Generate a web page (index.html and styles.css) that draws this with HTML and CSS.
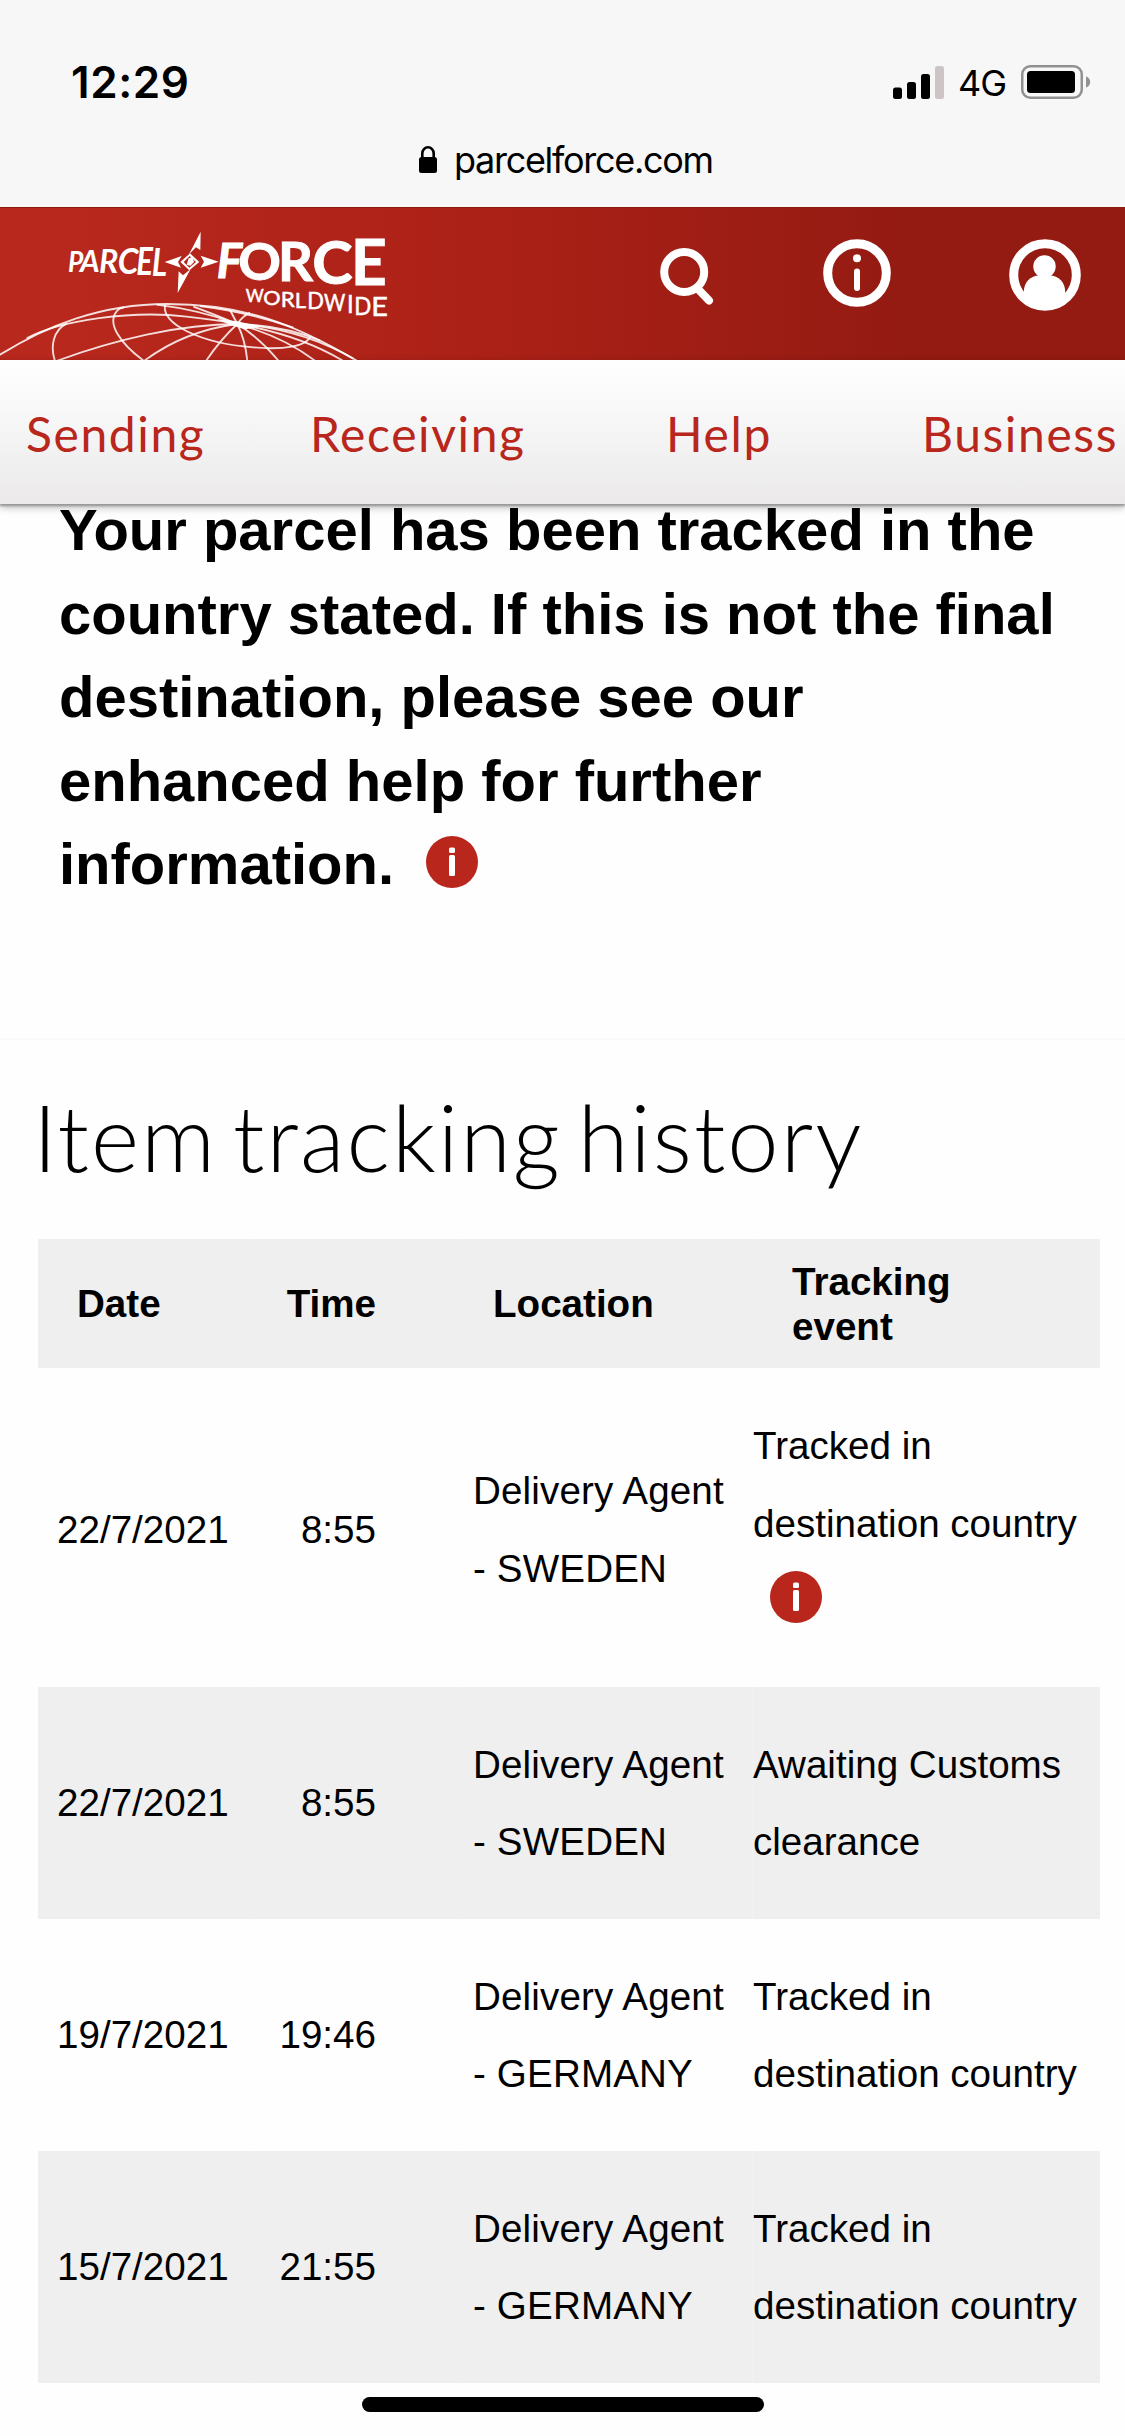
FILE: index.html
```html
<!DOCTYPE html>
<html lang="en">
<head>
<meta charset="utf-8">
<title>Parcelforce Worldwide - Track</title>
<link rel="stylesheet" href="styles.css">
</head>
<body>
<div class="status">
  <div class="status-row">
    <span class="clock">12:29</span>
    <div class="status-icons">
      <svg class="signal" width="52" height="33" viewBox="0 0 52 33">
        <rect x="0" y="21.500" width="9" height="11.500" rx="2.500"/>
        <rect x="14" y="16" width="9" height="17" rx="2.500"/>
        <rect x="28" y="8" width="9" height="25" rx="2.500"/>
        <rect x="42" y="0" width="9" height="33" rx="2.500" fill="#cdc4c5"/>
      </svg>
      <span class="network">4G</span>
      <svg class="battery" width="70" height="34" viewBox="0 0 70 34">
        <rect x="1.250" y="1.250" width="59.500" height="31.500" rx="8" fill="none" stroke="#919191" stroke-width="2.500"/>
        <rect x="6" y="6" width="48" height="22" rx="3.500"/>
        <path d="M65 11.500c2.600.8 4.200 3 4.200 5.500s-1.600 4.700-4.200 5.500z" fill="#919191"/>
      </svg>
    </div>
  </div>
  <div class="address">
    <svg width="18" height="28" viewBox="0 0 18 28">
      <rect x="0" y="11" width="18" height="16" rx="2.500"/>
      <path d="M3.300 12V7.500a5.700 6.200 0 0 1 11.400 0V12" fill="none" stroke="#000" stroke-width="2.600"/>
    </svg>
    <span class="domain">parcelforce.com</span>
  </div>
</div>

<header class="header">
  <svg class="logo" width="420" height="153" viewBox="0 21 1260 459">
    <g fill="none" stroke="#fff" stroke-opacity=".85" stroke-width="5.500">
      <path d="M-5 467C140 378 300 312 500 312C730 312 880 370 1072 483"/>
      <path d="M80 415C180 360 400 330 560 350Q650 360 712 372"/>
      <path d="M170 483C340 420 540 372 712 372"/>
      <path d="M432 483C510 425 610 385 712 372"/>
      <path d="M618 483Q660 420 712 372Q728 348 750 338"/>
      <path d="M742 483Q736 420 712 372L690 330"/>
      <path d="M836 483Q780 415 712 372Q600 330 470 314"/>
      <path d="M946 483Q850 410 712 372Q640 342 580 320"/>
      <path d="M1030 483Q900 405 712 372"/>
      <path d="M1060 476Q900 385 712 372"/>
      <path d="M960 422Q850 376 712 372"/>
      <path d="M880 383Q740 335 600 318"/>
      <path d="M165 483C150 440 160 390 200 371"/>
      <path d="M432 483C360 430 320 370 350 334Q357 324 372 322"/>
      <path d="M496 314C480 370 600 430 760 442C850 450 920 440 932 408"/>
    </g>
    <path fill="#fff" d="M650 357L712 364L785 380L735 388L690 374z"/>
    <g fill="#fff" class="mark">
      <g class="mark-parcel">
        <text x="204" y="215" font-size="88" textLength="46" lengthAdjust="spacingAndGlyphs">P</text>
        <text x="240" y="217" font-size="92" textLength="59" lengthAdjust="spacingAndGlyphs">A</text>
        <text x="297" y="220" font-size="98" textLength="58" lengthAdjust="spacingAndGlyphs">R</text>
        <text x="353" y="223" font-size="106" textLength="62" lengthAdjust="spacingAndGlyphs">C</text>
        <text x="409" y="225" font-size="112" textLength="50" lengthAdjust="spacingAndGlyphs">E</text>
        <text x="455" y="227" font-size="115" textLength="46" lengthAdjust="spacingAndGlyphs">L</text>
      </g>
      <g class="mark-force">
        <text class="slant" x="650" y="235" font-size="141" textLength="76" lengthAdjust="spacingAndGlyphs">F</text>
        <text x="715" y="240" font-size="154" textLength="128" lengthAdjust="spacingAndGlyphs">O</text>
        <text x="834" y="244" font-size="162" textLength="105" lengthAdjust="spacingAndGlyphs">R</text>
        <text x="937" y="252" font-size="180" textLength="121" lengthAdjust="spacingAndGlyphs">C</text>
        <text x="1053" y="255" font-size="190" textLength="107" lengthAdjust="spacingAndGlyphs">E</text>
      </g>
      <g class="mark-world">
        <text x="737" y="305" font-size="53" textLength="54" lengthAdjust="spacingAndGlyphs">W</text>
        <text x="790" y="316" font-size="59" textLength="52" lengthAdjust="spacingAndGlyphs">O</text>
        <text x="842" y="320" font-size="62" textLength="42" lengthAdjust="spacingAndGlyphs">R</text>
        <text x="884" y="325" font-size="66" textLength="34" lengthAdjust="spacingAndGlyphs">L</text>
        <text x="922" y="328" font-size="68" textLength="50" lengthAdjust="spacingAndGlyphs">D</text>
        <text x="972" y="333" font-size="70" textLength="64" lengthAdjust="spacingAndGlyphs">W</text>
        <text x="1041" y="340" font-size="74" textLength="20" lengthAdjust="spacingAndGlyphs">I</text>
        <text x="1063" y="344" font-size="76" textLength="51" lengthAdjust="spacingAndGlyphs">D</text>
        <text x="1114" y="349" font-size="80" textLength="50" lengthAdjust="spacingAndGlyphs">E</text>
      </g>
      <path d="M602 95L601 150L588 142L567 163zM533 279L536 214L549 226L572 207zM494 186L545 168L534 186L543 203zM656 185L602 167L612 185L602 203z"/>
      <path fill-rule="evenodd" d="M570 160L598 186L568 211L541 186zM569 168L551 186L568 203L588 186z"/>
      <path d="M560 194L566 175L577 171L582 186L571 197z"/>
    </g>
  </svg>
  <svg class="icon-search" width="56" height="58" viewBox="0 0 56 58" fill="none" stroke="#fff">
    <circle cx="24.200" cy="24" r="20" stroke-width="8"/>
    <path d="M37.500 40.500L49 52.500" stroke-width="8" stroke-linecap="round"/>
  </svg>
  <svg class="icon-info" width="68" height="68" viewBox="0 0 68 68">
    <circle cx="34" cy="34" r="29.300" fill="none" stroke="#fff" stroke-width="9"/>
    <circle cx="34" cy="19.300" r="4" fill="#fff"/>
    <path d="M34 32.500V49" stroke="#fff" stroke-width="6" stroke-linecap="round"/>
  </svg>
  <svg class="icon-user" width="72" height="72" viewBox="0 0 72 72">
    <circle cx="36" cy="36" r="31.300" fill="none" stroke="#fff" stroke-width="9"/>
    <circle cx="35.500" cy="27.500" r="11.200" fill="#fff"/>
    <path d="M15 54C14 43 22 36.500 30 36.500H41C49 36.500 57 43 56 54L50 64H22z" fill="#fff"/>
  </svg>
</header>

<nav class="nav">
  <a class="nav-sending">Sending</a>
  <a class="nav-receiving">Receiving</a>
  <a class="nav-help">Help</a>
  <a class="nav-business">Business</a>
</nav>

<main>
  <section class="notice">
    <p>Your parcel has been tracked in the<br>country stated. If this is not the final<br>destination, please see our<br>enhanced help for further<br>information.<svg class="tip" width="52" height="52" viewBox="0 0 52 52"><circle cx="26" cy="26" r="26"/><rect x="23" y="11.500" width="6" height="5.500" rx="1.500"/><rect x="23" y="19" width="6" height="21" rx="1.500"/></svg></p>
  </section>

  <section class="history">
    <h1>Item tracking history</h1>
    <div class="table">
      <div class="row head">
        <div class="date">Date</div><div class="time">Time</div><div class="place">Location</div><div class="event">Tracking<br>event</div>
      </div>
      <div class="row tall">
        <div class="date">22/7/2021</div><div class="time">8:55</div><div class="place">Delivery Agent<br>- SWEDEN</div>
        <div class="event">Tracked in<br>destination country<svg class="tip" width="52" height="52" viewBox="0 0 52 52"><circle cx="26" cy="26" r="26"/><rect x="23" y="11.500" width="6" height="5.500" rx="1.500"/><rect x="23" y="19" width="6" height="21" rx="1.500"/></svg></div>
      </div>
      <div class="row shaded">
        <div class="date">22/7/2021</div><div class="time">8:55</div><div class="place">Delivery Agent<br>- SWEDEN</div><div class="event">Awaiting Customs<br>clearance</div>
      </div>
      <div class="row">
        <div class="date">19/7/2021</div><div class="time">19:46</div><div class="place">Delivery Agent<br>- GERMANY</div><div class="event">Tracked in<br>destination country</div>
      </div>
      <div class="row shaded">
        <div class="date">15/7/2021</div><div class="time">21:55</div><div class="place">Delivery Agent<br>- GERMANY</div><div class="event">Tracked in<br>destination country</div>
      </div>
    </div>
  </section>
</main>
<div class="home-bar"></div>
</body>
</html>
```
FILE: styles.css
```css
* { box-sizing: border-box; }

body {
  margin: 0;
  width: 1125px;
  height: 2436px;
  overflow: hidden;
  background: #fefefe;
  color: #000;
  font-family: "Liberation Sans", Arial, sans-serif;
}

svg { display: block; flex: none; }

/* phone status bar and address */
.status {
  height: 207px;
  background: #f7f7f7;
  font-family: Inter, sans-serif;
}
.status-row {
  display: flex;
  justify-content: space-between;
  height: 130px;
  padding: 55px 34px 0 71px;
}
.clock {
  font-size: 44px;
  line-height: 54px;
  font-weight: 600;
  letter-spacing: 0.6px;
}
.status-icons { display: flex; align-items: flex-start; }
.signal { margin-top: 11px; }
.network {
  width: 48px;
  margin: 6px 15px 0 13px;
  font-size: 36px;
  line-height: 44px;
  letter-spacing: -1px;
}
.battery { margin-top: 10px; }
.address {
  display: flex;
  padding: 8px 0 0 419px;
}
.address svg { margin: 8px 17px 0 0; }
.domain { font-size: 36px; line-height: 44px; letter-spacing: -1.3px; }

/* branded header */
.header {
  display: flex;
  align-items: flex-start;
  height: 153px;
  border-top: 1px solid #8a1a12;
  background: linear-gradient(90deg, #b8281d 5%, #ac2117 42%, #941b12 80%);
}
.logo { margin-top: -1px; }
.icon-search { margin: 40px 0 0 240px; }
.icon-info { margin: 31px 0 0 107px; }
.icon-user { margin: 31px 0 0 118px; }
.mark { font-family: Lato, sans-serif; font-weight: 700; }
.mark-parcel { font-style: italic; }
.mark-force .slant { font-style: italic; }
.mark-force { stroke: #fff; stroke-width: 3; }
.mark-world { font-weight: 400; stroke: #fff; stroke-width: 1.5; }

.nav {
  position: relative;
  display: flex;
  height: 144px;
  padding-top: 45px;
  background: linear-gradient(#fff, #f6f6f6 45%, #ebe9ea);
  box-shadow: 0 2px 2px #989898, 0 3px 8px rgba(0, 0, 0, 0.3);
  color: #b8261c;
  font: 48px/58px Lato, sans-serif;
  letter-spacing: 1.6px;
}
.nav-sending { width: 285px; padding-left: 26px; }
.nav-receiving { width: 356px; padding-left: 25px; }
.nav-help { width: 256px; padding-left: 25px; }
.nav-business { padding-left: 25px; }

.notice {
  display: flow-root;
  height: 536px;
  padding: 0 0 0 59px;
  border-bottom: 2px solid #f9f9f9;
}
.notice p {
  margin: -16px 0 0;
  font-size: 58px;
  line-height: 83.6px;
  font-weight: 700;
  white-space: nowrap;
}
.tip circle { fill: #b8261c; }
.tip rect { fill: #fff; }
.notice .tip {
  display: inline-block;
  margin-left: 32px;
  vertical-align: -4px;
}

.history { padding: 0 25px 0 38px; }
h1 {
  height: 199px;
  margin: 0 0 0 -5px;
  padding-top: 43px;
  font: 300 92px/108px Lato, sans-serif;
  letter-spacing: 2px;
  word-spacing: -11px;
  white-space: nowrap;
}
.row {
  display: grid;
  grid-template-columns: 212px 208px 295px 347px;
  height: 232px;
  font-size: 38.6px;
  line-height: 77.5px;
  white-space: nowrap;
}
.row > div {
  display: block;
  align-self: stretch;
  align-content: center;
}
.head {
  height: 129px;
  background: #efefef;
  font-weight: 700;
  line-height: 45px;
}
.shaded { background: #efefef; }
.head > div + div, .shaded > div + div { border-left: 1px dotted #f3f3f3; }
.tall { height: 319px; }
.tall .date, .tall .time, .tall .place { padding-top: 4px; }
.date { padding-left: 19px; }
.row .time { padding-right: 82px; text-align: right; }
.place { padding-left: 15px; letter-spacing: 0.15px; }
.shaded .place { padding-left: 14px; }
.shaded .event { margin-left: -1px; }
.head .date { padding-left: 39px; }
.head .place { padding-left: 34px; letter-spacing: 0; }
.head .event { padding-left: 38px; }
.event .tip { margin: 9px 0 25px 17px; }

.home-bar {
  width: 402px;
  height: 15px;
  margin: 14px 0 0 362px;
  border-radius: 8px;
  background: #000;
}
```
